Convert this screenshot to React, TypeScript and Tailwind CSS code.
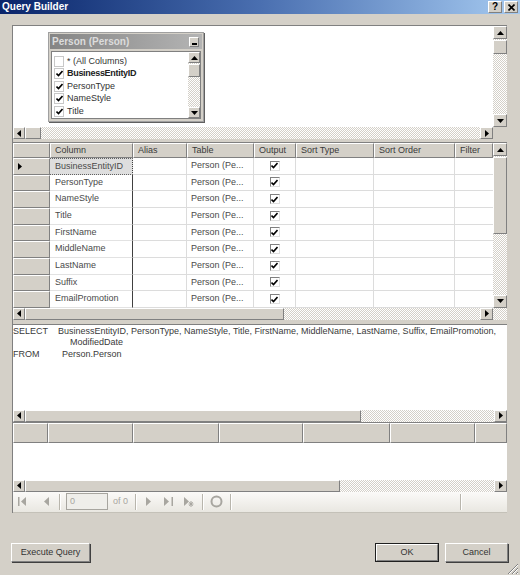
import React from 'react'

// classic win2k bevel used by buttons, scroll arrows, thumbs and header cells
const bevel = 'bg-[#d4d0c8] border border-t-white border-l-white border-r-[#808080] border-b-[#808080]'
const track = 'bg-[repeating-conic-gradient(#d4d0c8_0_25%,#ffffff_0_50%)] bg-[length:2px_2px]'

type Dir = 'up' | 'down' | 'left' | 'right'

function Tri({ dir, color = '#000' }: { dir: Dir; color?: string }) {
  const vert = dir === 'up' || dir === 'down'
  const w = vert ? 7 : 4
  const h = vert ? 4 : 7
  const pts = {
    up: '0,4 7,4 3.5,0',
    down: '0,0 7,0 3.5,4',
    left: '4,0 4,7 0,3.5',
    right: '0,0 0,7 4,3.5',
  }[dir]
  return (
    <svg width={w} height={h} viewBox={`0 0 ${w} ${h}`}>
      <polygon points={pts} fill={color} />
    </svg>
  )
}

function Arrow({ dir, className = '' }: { dir: Dir; className?: string }) {
  return (
    <div className={`${bevel} flex items-center justify-center shrink-0 ${className}`}>
      <Tri dir={dir} />
    </div>
  )
}

function HScroll({ thumb, width }: { thumb: number; width?: number }) {
  return (
    <div className="flex h-[12px] shrink-0" style={width ? { width } : undefined}>
      <Arrow dir="left" className="w-[12px] h-[12px]" />
      <div className={`${bevel} h-[12px] shrink-0`} style={{ width: thumb }} />
      <div className={`flex-1 ${track}`} />
      <Arrow dir="right" className="w-[13px] h-[12px]" />
    </div>
  )
}

function VScroll({ thumbTop, thumbH }: { thumbTop: number; thumbH: number }) {
  return (
    <div className={`w-[14px] shrink-0 flex flex-col ${track}`}>
      <Arrow dir="up" className="w-[14px] h-[13px]" />
      <div className="shrink-0" style={{ height: thumbTop }} />
      <div className={`${bevel} w-[14px] shrink-0`} style={{ height: thumbH }} />
      <div className="flex-1" />
      <Arrow dir="down" className="w-[14px] h-[13px]" />
    </div>
  )
}

function Check() {
  return (
    <svg width="7" height="7" viewBox="0 0 7 7">
      <path d="M0.5 3.5 L2.5 5.5 L6.5 1" stroke="#000" strokeWidth="1.6" fill="none" />
    </svg>
  )
}

const diagramCols = [
  { name: '* (All Columns)', checked: false },
  { name: 'BusinessEntityID', checked: true, bold: true },
  { name: 'PersonType', checked: true },
  { name: 'NameStyle', checked: true },
  { name: 'Title', checked: true },
]

const gridRows = [
  'BusinessEntityID',
  'PersonType',
  'NameStyle',
  'Title',
  'FirstName',
  'MiddleName',
  'LastName',
  'Suffix',
  'EmailPromotion',
]

const gridCols = [
  { name: 'Column', w: 83 },
  { name: 'Alias', w: 54 },
  { name: 'Table', w: 67 },
  { name: 'Output', w: 42 },
  { name: 'Sort Type', w: 78 },
  { name: 'Sort Order', w: 81 },
  { name: 'Filter', w: 38 },
]

const resultCols = [85, 86, 84, 87, 85, 32]

function Sep() {
  return <div className="w-[2px] h-[16px] border-l border-[#b8b5ac] border-r border-r-white mx-[5px]" />
}

function Navigator() {
  const g = '#a8a6a0'
  return (
    <div className="h-[21px] flex items-center pl-[3px] bg-gradient-to-b from-[#fbfaf8] to-[#e9e7e1] text-[#a8a6a0] border-b border-[#c4c1b8]">
      <svg width="10" height="9" viewBox="0 0 10 9" className="ml-[2px]">
        <rect x="0" y="0" width="1.5" height="9" fill={g} />
        <polygon points="8,0 8,9 3,4.5" fill={g} />
      </svg>
      <svg width="6" height="9" viewBox="0 0 6 9" className="ml-[16px]">
        <polygon points="5,0 5,9 0,4.5" fill={g} />
      </svg>
      <div className="ml-[4px]"><Sep /></div>
      <div className="w-[42px] h-[17px] border border-[#a7a59f] bg-[#efeeea] text-[9px] leading-[15px] pl-[3px]">0</div>
      <span className="ml-[5px] text-[9px]">of 0</span>
      <div className="ml-[2px]"><Sep /></div>
      <svg width="6" height="9" viewBox="0 0 6 9" className="ml-[4px]">
        <polygon points="0,0 0,9 5,4.5" fill={g} />
      </svg>
      <svg width="10" height="9" viewBox="0 0 10 9" className="ml-[12px]">
        <polygon points="0,0 0,9 5,4.5" fill={g} />
        <rect x="7.5" y="0" width="1.5" height="9" fill={g} />
      </svg>
      <svg width="11" height="11" viewBox="0 0 11 11" className="ml-[10px]">
        <polygon points="0,1 0,10 5,5.5" fill={g} />
        <path d="M7 5 v6 M4.5 8 h5 M5.3 6 l3.4 4 M8.7 6 l-3.4 4" stroke={g} strokeWidth="1" />
      </svg>
      <div className="ml-[2px]"><Sep /></div>
      <svg width="13" height="13" viewBox="0 0 13 13" className="ml-[1px]">
        <circle cx="6.5" cy="6.5" r="5" fill="none" stroke={g} strokeWidth="2" />
      </svg>
      <div className="ml-[2px]"><Sep /></div>
      <div className="flex-1" />
      <Sep />
      <div className="w-[40px]" />
    </div>
  )
}

export default function App() {
  return (
    <div className="w-[520px] h-[575px] bg-[#d4d0c8] flex flex-col font-['Liberation_Sans',Arial,sans-serif] text-[9px] text-[#3a3a3a] overflow-hidden select-none">
      {/* Title bar */}
      <div className="h-[14px] shrink-0 flex items-center justify-between bg-gradient-to-r from-[#0a246a] via-[#4a6fb0] to-[#a6caf0] pl-[2px] pr-[2px]">
        <span className="text-white font-bold text-[10px] leading-none">Query Builder</span>
        <div className="flex gap-[2px]">
          <div className={`${bevel} w-[14px] h-[12px] flex items-center justify-center text-[10px] font-bold text-black leading-none`}>?</div>
          <div className={`${bevel} w-[14px] h-[12px] flex items-center justify-center`}>
            <svg width="7" height="7" viewBox="0 0 7 7">
              <path d="M0.5 0.5 L6.5 6.5 M6.5 0.5 L0.5 6.5" stroke="#000" strokeWidth="1.6" />
            </svg>
          </div>
        </div>
      </div>

      {/* Panes */}
      <div className="ml-[12px] mt-[11px] w-[495px] flex flex-col border-l border-t border-[#808080]">
        {/* Diagram pane */}
        <div className="flex flex-col h-[113px]">
          <div className="flex flex-1">
            <div className="relative flex-1 bg-white">
              <div className="absolute left-[35px] top-[6px] w-[156px] h-[90px] bg-[#d4d0c8] border border-[#a0a0a0] shadow-[1px_1px_0_#606060] flex flex-col p-[1px]">
                <div className="h-[15px] shrink-0 flex items-center justify-between bg-gradient-to-r from-[#858585] to-[#b4b4b4] pl-[2px] pr-[3px]">
                  <span className="font-bold text-[10px] text-[#dcdcdc] leading-none">Person (Person)</span>
                  <div className={`${bevel} w-[10px] h-[10px] flex items-end justify-center pb-[1px]`}>
                    <div className="w-[5px] h-[2px] bg-black" />
                  </div>
                </div>
                <div className="flex flex-1 mt-[2px] mx-[1px] mb-[1px] bg-white border border-[#808080]">
                  <div className="flex-1 flex flex-col pt-[3px] pl-[2px]">
                    {diagramCols.map((c) => (
                      <div key={c.name} className="h-[12.5px] flex items-center gap-[3px]">
                        <div className="w-[10px] h-[11px] bg-white border border-[#c8c8c8] flex items-center justify-center">
                          {c.checked && <Check />}
                        </div>
                        <span className={c.bold ? 'font-bold text-[#222] tracking-[-0.3px]' : 'text-[#333]'}>{c.name}</span>
                      </div>
                    ))}
                  </div>
                  <div className={`w-[12px] shrink-0 flex flex-col ${track}`}>
                    <Arrow dir="up" className="w-[12px] h-[11px]" />
                    <div className={`${bevel} w-[12px] h-[13px] mt-[1px]`} />
                    <div className="flex-1" />
                    <Arrow dir="down" className="w-[12px] h-[11px]" />
                  </div>
                </div>
              </div>
            </div>
            <VScroll thumbTop={1} thumbH={14} />
          </div>
          <div className="flex">
            <HScroll thumb={16} width={480} />
            <div className="w-[14px] bg-[#d4d0c8]" />
          </div>
        </div>

        {/* Grid pane */}
        <div className="flex flex-col mt-[3px] border-t border-[#808080]">
          <div className="flex">
            <div className="w-[480px] flex flex-col bg-white">
              <div className="flex h-[15px]">
                <div className={`${bevel} w-[37px] shrink-0`} />
                {gridCols.map((c) => (
                  <div key={c.name} className={`${bevel} shrink-0 flex items-center pl-[4px]`} style={{ width: c.w }}>
                    {c.name}
                  </div>
                ))}
              </div>
              {gridRows.map((r, i) => (
                <div key={r} className="flex h-[16.67px] text-[#4a4a4a]">
                  <div className={`${bevel} w-[37px] shrink-0 flex items-center pl-[4px]`}>
                    {i === 0 && <Tri dir="right" />}
                  </div>
                  <div
                    className={`w-[83px] shrink-0 flex items-center pl-[5px] border-r border-r-[#404040] ${
                      i === 0
                        ? 'bg-[#dedede] border-t border-b border-dotted border-t-[#606060] border-b-[#606060]'
                        : 'border-b border-[#e2e2e2]'
                    }`}
                  >
                    {r}
                  </div>
                  <div className="w-[54px] shrink-0 border-r border-b border-[#dcdcdc]" />
                  <div className="w-[67px] shrink-0 flex items-center pl-[4px] border-r border-b border-[#dcdcdc]">Person (Pe...</div>
                  <div className="w-[42px] shrink-0 flex items-center justify-center border-r border-b border-[#dcdcdc]">
                    <div className="w-[10px] h-[10px] bg-white border border-t-[#808080] border-l-[#808080] border-r-[#e0e0e0] border-b-[#e0e0e0] flex items-center justify-center">
                      <Check />
                    </div>
                  </div>
                  <div className="w-[78px] shrink-0 border-r border-b border-[#dcdcdc]" />
                  <div className="w-[81px] shrink-0 border-r border-b border-[#dcdcdc]" />
                  <div className="w-[38px] shrink-0 border-b border-[#dcdcdc]" />
                </div>
              ))}
            </div>
            <VScroll thumbTop={1} thumbH={77} />
          </div>
          <div className="flex">
            <HScroll thumb={259} width={480} />
            <div className={`w-[14px] ${track}`} />
          </div>
        </div>

        {/* SQL pane */}
        <div className="flex flex-col mt-[4px] border-t border-[#808080]">
          <div className="h-[85px] bg-white pt-[1px] leading-[11.5px] whitespace-nowrap overflow-hidden">
            <div className="flex">
              <span className="w-[45px] shrink-0">SELECT</span>
              <span>BusinessEntityID, PersonType, NameStyle, Title, FirstName, MiddleName, LastName, Suffix, EmailPromotion,</span>
            </div>
            <div className="pl-[57px]">ModifiedDate</div>
            <div className="flex">
              <span className="w-[49px] shrink-0">FROM</span>
              <span>Person.Person</span>
            </div>
          </div>
          <HScroll thumb={336} />
        </div>

        {/* Results pane */}
        <div className="flex flex-col border-t border-[#808080]">
          <div className="flex h-[20px]">
            <div className={`${bevel} w-[35px] shrink-0`} />
            {resultCols.map((w, i) => (
              <div key={i} className={`${bevel} shrink-0`} style={{ width: w }} />
            ))}
          </div>
          <div className="h-[37px] bg-white" />
          <HScroll thumb={315} />
          <Navigator />
        </div>
      </div>

      {/* Buttons */}
      <div className="flex items-center mt-[30px] pl-[11px] pr-[12px]">
        <button className={`${bevel} w-[79px] h-[19px] text-[9px] text-[#333] shadow-[1px_1px_0_#404040]`}>Execute Query</button>
        <div className="flex-1" />
        <button className="w-[64px] h-[19px] border border-[#202020] p-0">
          <div className={`${bevel} w-full h-full flex items-center justify-center text-[9px] text-[#333]`}>OK</div>
        </button>
        <button className={`${bevel} ml-[6px] w-[63px] h-[19px] text-[9px] text-[#333] shadow-[1px_1px_0_#404040]`}>Cancel</button>
      </div>

      {/* Size grip */}
      <div className="flex justify-end mt-auto pr-[1px] pb-[1px]">
        <svg width="13" height="13" viewBox="0 0 13 13">
          <path d="M12 2 L2 12 M12 6 L6 12 M12 10 L10 12" stroke="#808080" strokeWidth="1" />
          <path d="M12 3 L3 12 M12 7 L7 12 M12 11 L11 12" stroke="#ffffff" strokeWidth="1" />
        </svg>
      </div>
    </div>
  )
}
